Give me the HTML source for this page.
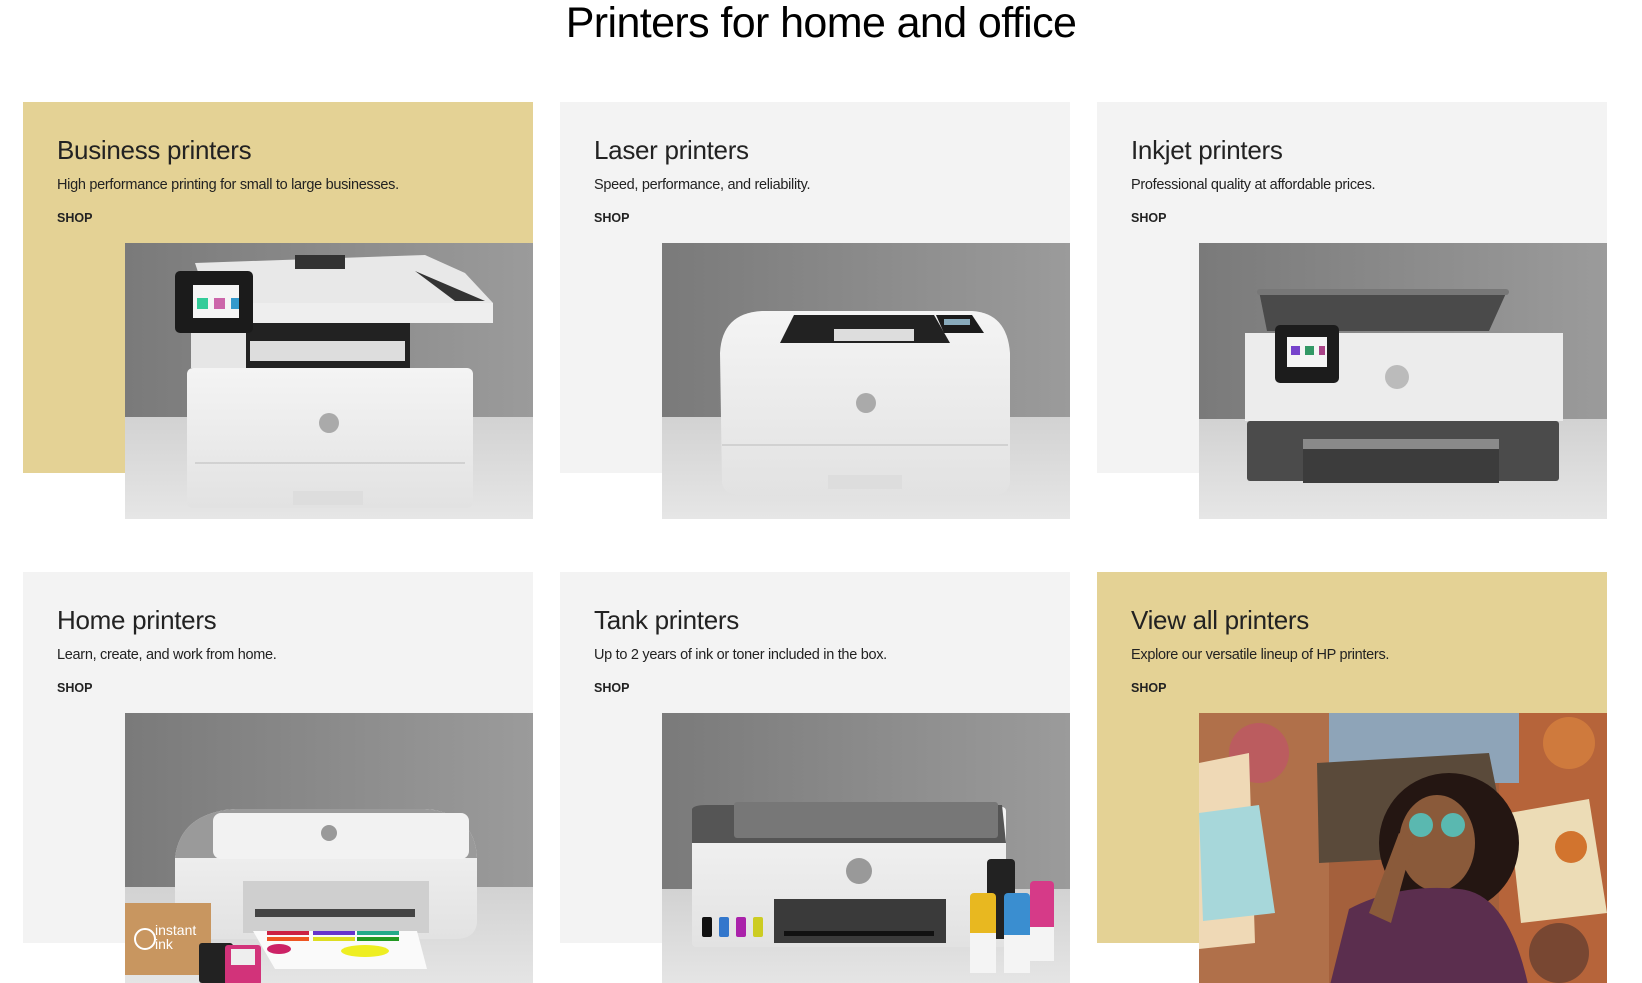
<!DOCTYPE html>
<html><head><meta charset="utf-8"><style>
*{margin:0;padding:0;box-sizing:border-box}
body{width:1642px;height:982px;overflow:hidden;background:#fff;font-family:"Liberation Sans",sans-serif;color:#1a1a1a;position:relative}
h1{position:absolute;left:0;right:0;top:-1px;text-align:center;font-weight:400;font-size:43px;letter-spacing:-0.6px;color:#000}
.card{position:absolute;width:510px}
.bg{position:absolute;left:0;top:0;width:510px;height:371px;background:#f3f3f3}
.gold .bg{background:#e4d295}
.t{position:absolute;left:34px;top:33px;font-size:26px;letter-spacing:-0.3px;color:#222}
.s{position:absolute;left:34px;top:75px;font-size:14.5px;letter-spacing:-0.3px;color:#222}
.shop{position:absolute;left:34px;top:109px;font-size:12.5px;font-weight:700;color:#222}
.img{position:absolute;left:102px;top:141px;width:408px;height:276px;overflow:hidden;background:#888}
.img svg{display:block}
</style></head><body>
<h1>Printers for home and office</h1>

<svg width="0" height="0" style="position:absolute"><defs>
<linearGradient id="wall" x1="0" y1="0" x2="1" y2="0"><stop offset="0" stop-color="#7a7a7a"/><stop offset="1" stop-color="#9b9b9b"/></linearGradient>
<linearGradient id="floor" x1="0" y1="0" x2="0" y2="1"><stop offset="0" stop-color="#d2d2d2"/><stop offset="1" stop-color="#e6e6e6"/></linearGradient>
<linearGradient id="wh" x1="0" y1="0" x2="0" y2="1"><stop offset="0" stop-color="#f4f4f4"/><stop offset="1" stop-color="#e2e2e2"/></linearGradient>
</defs></svg>

<div class="card gold" style="left:23px;top:102px"><div class="bg"></div>
<div class="t">Business printers</div><div class="s">High performance printing for small to large businesses.</div><div class="shop">SHOP</div>
<div class="img"><svg width="408" height="276" viewBox="0 0 408 276">
<rect width="408" height="174" fill="url(#wall)"/><rect y="174" width="408" height="102" fill="url(#floor)"/>
<path d="M70 20 L300 12 L340 30 L368 60 L368 78 L90 80 Z" fill="#e8e8e8"/>
<path d="M290 28 L360 58 L330 58 Z" fill="#333"/>
<rect x="170" y="12" width="50" height="14" fill="#333"/>
<rect x="62" y="60" width="306" height="20" fill="#eee"/>
<rect x="120" y="80" width="165" height="45" fill="#222"/>
<rect x="125" y="98" width="155" height="20" fill="#ddd"/>
<rect x="66" y="80" width="55" height="45" fill="#e6e6e6"/>
<rect x="50" y="28" width="78" height="62" rx="5" fill="#1b1b1b"/>
<rect x="68" y="42" width="46" height="33" fill="#f5f5f5"/>
<rect x="72" y="55" width="11" height="11" fill="#3c9"/><rect x="89" y="55" width="11" height="11" fill="#c6a"/><rect x="106" y="55" width="8" height="11" fill="#39c"/>
<rect x="62" y="125" width="286" height="140" rx="6" fill="url(#wh)"/>
<line x1="70" y1="220" x2="340" y2="220" stroke="#bbb"/>
<rect x="168" y="248" width="70" height="14" fill="#ddd"/>
<circle cx="204" cy="180" r="10" fill="#aaa"/>
</svg></div></div>

<div class="card" style="left:560px;top:102px"><div class="bg"></div>
<div class="t">Laser printers</div><div class="s">Speed, performance, and reliability.</div><div class="shop">SHOP</div>
<div class="img"><svg width="408" height="276" viewBox="0 0 408 276">
<rect width="408" height="174" fill="url(#wall)"/><rect y="174" width="408" height="102" fill="url(#floor)"/>
<path d="M58 110 Q60 70 100 68 L310 68 Q345 70 348 110 L348 240 Q346 252 330 252 L80 252 Q62 252 60 240 Z" fill="url(#wh)"/>
<path d="M118 100 L132 72 L272 72 L288 100 Z" fill="#222"/><rect x="172" y="86" width="80" height="12" fill="#ddd"/>
<path d="M274 72 L310 72 L322 90 L282 90 Z" fill="#1b1b1b"/><rect x="282" y="76" width="26" height="6" fill="#8ab"/>
<line x1="60" y1="202" x2="346" y2="202" stroke="#bbb"/>
<rect x="166" y="232" width="74" height="14" fill="#ddd"/>
<circle cx="204" cy="160" r="10" fill="#aaa"/>
</svg></div></div>

<div class="card" style="left:1097px;top:102px"><div class="bg"></div>
<div class="t">Inkjet printers</div><div class="s">Professional quality at affordable prices.</div><div class="shop">SHOP</div>
<div class="img"><svg width="408" height="276" viewBox="0 0 408 276">
<rect width="408" height="176" fill="url(#wall)"/><rect y="176" width="408" height="100" fill="url(#floor)"/>
<path d="M60 48 L308 48 L290 88 L68 88 Z" fill="#4a4a4a"/><rect x="58" y="46" width="252" height="6" rx="3" fill="#777"/>
<rect x="46" y="90" width="318" height="88" fill="#ececec"/>
<rect x="48" y="178" width="312" height="60" rx="3" fill="#4b4b4b"/>
<rect x="104" y="196" width="196" height="44" fill="#3c3c3c"/><rect x="104" y="196" width="196" height="10" fill="#8a8a8a"/>
<rect x="76" y="82" width="64" height="58" rx="5" fill="#1c1c1c"/>
<rect x="88" y="94" width="40" height="30" fill="#f5f5f5"/>
<rect x="92" y="103" width="9" height="9" fill="#74c"/><rect x="106" y="103" width="9" height="9" fill="#396"/><rect x="120" y="103" width="6" height="9" fill="#a48"/>
<circle cx="198" cy="134" r="12" fill="#bbb"/>
</svg></div></div>

<div class="card" style="left:23px;top:572px"><div class="bg"></div>
<div class="t">Home printers</div><div class="s">Learn, create, and work from home.</div><div class="shop">SHOP</div>
<div class="img" style="height:270px"><svg width="408" height="276" viewBox="0 0 408 276">
<rect width="408" height="174" fill="url(#wall)"/><rect y="174" width="408" height="102" fill="url(#floor)"/>
<path d="M50 145 Q55 100 110 96 L300 96 Q350 100 352 145 L352 210 Q350 226 330 226 L72 226 Q52 226 50 210 Z" fill="url(#wh)"/>
<path d="M50 145 Q55 100 110 96 L300 96 Q350 100 352 145 Z" fill="#9a9a9a"/>
<rect x="88" y="100" width="256" height="46" rx="8" fill="#f2f2f2"/>
<rect x="118" y="168" width="186" height="52" fill="#cfcfcf"/><rect x="130" y="196" width="160" height="8" fill="#444"/>
<path d="M128 218 L292 218 L302 256 L150 256 Z" fill="#fafafa"/>
<rect x="142" y="218" width="42" height="4" fill="#c24"/><rect x="188" y="218" width="42" height="4" fill="#63c"/><rect x="232" y="218" width="42" height="4" fill="#2a8"/>
<rect x="142" y="224" width="42" height="4" fill="#e52"/><rect x="188" y="224" width="42" height="4" fill="#dd2"/><rect x="232" y="224" width="42" height="4" fill="#292"/>
<ellipse cx="240" cy="238" rx="24" ry="6" fill="#ee2"/><ellipse cx="154" cy="236" rx="12" ry="5" fill="#c26"/>
<rect x="0" y="190" width="86" height="72" fill="#c89660"/><text x="30" y="222" font-size="14" fill="#fff" font-family="Liberation Sans">instant</text><text x="30" y="236" font-size="14" fill="#fff" font-family="Liberation Sans">ink</text>
<circle cx="20" cy="226" r="10" fill="none" stroke="#fff" stroke-width="2"/>
<rect x="74" y="230" width="34" height="40" rx="3" fill="#222"/><rect x="100" y="232" width="36" height="40" rx="3" fill="#d2337a"/><rect x="106" y="236" width="24" height="16" fill="#eee"/>
<circle cx="204" cy="120" r="8" fill="#999"/>
</svg></div></div>

<div class="card" style="left:560px;top:572px"><div class="bg"></div>
<div class="t">Tank printers</div><div class="s">Up to 2 years of ink or toner included in the box.</div><div class="shop">SHOP</div>
<div class="img" style="height:270px"><svg width="408" height="276" viewBox="0 0 408 276">
<rect width="408" height="176" fill="url(#wall)"/><rect y="176" width="408" height="100" fill="url(#floor)"/>
<rect x="30" y="94" width="314" height="140" rx="4" fill="url(#wh)"/>
<path d="M30 130 L30 96 Q32 92 44 92 L340 92 L344 130 Z" fill="#555"/>
<rect x="72" y="89" width="264" height="36" rx="3" fill="#777"/>
<rect x="112" y="186" width="172" height="44" fill="#3a3a3a"/><rect x="122" y="218" width="150" height="5" fill="#111"/>
<rect x="40" y="204" width="10" height="20" rx="2" fill="#111"/><rect x="57" y="204" width="10" height="20" rx="2" fill="#37c"/><rect x="74" y="204" width="10" height="20" rx="2" fill="#a2a"/><rect x="91" y="204" width="10" height="20" rx="2" fill="#cc2"/>
<circle cx="197" cy="158" r="13" fill="#999"/>
<rect x="325" y="146" width="28" height="80" rx="4" fill="#222"/>
<rect x="308" y="180" width="26" height="80" rx="4" fill="#e8b820"/><rect x="308" y="220" width="26" height="40" fill="#f4f4f4"/>
<rect x="342" y="180" width="26" height="80" rx="4" fill="#3a8ed0"/><rect x="342" y="222" width="26" height="38" fill="#f4f4f4"/>
<rect x="368" y="168" width="24" height="80" rx="4" fill="#d63a88"/><rect x="368" y="214" width="24" height="34" fill="#f4f4f4"/>
</svg></div></div>

<div class="card gold" style="left:1097px;top:572px"><div class="bg"></div>
<div class="t">View all printers</div><div class="s">Explore our versatile lineup of HP printers.</div><div class="shop">SHOP</div>
<div class="img" style="height:270px;background:#a05a3a"><svg width="408" height="276" viewBox="0 0 408 276">
<rect width="408" height="276" fill="#a4603c"/>
<rect x="0" y="0" width="130" height="276" fill="#b0704a"/><rect x="300" y="0" width="108" height="276" fill="#b6643a"/>
<circle cx="60" cy="40" r="30" fill="#c34f6e" opacity=".6"/><circle cx="370" cy="30" r="26" fill="#e08840" opacity=".6"/><circle cx="360" cy="240" r="30" fill="#3a2a2a" opacity=".5"/>
<rect x="130" y="0" width="190" height="70" fill="#8ea4b8"/>
<path d="M118 50 L290 40 L310 140 L120 150 Z" fill="#5a4a3a"/>
<path d="M0 50 L50 40 L56 230 L0 236 Z" fill="#efd9b6"/>
<path d="M0 100 L60 92 L76 200 L4 208 Z" fill="#a7d7da"/>
<path d="M310 100 L390 86 L408 200 L322 210 Z" fill="#ecdcb6"/>
<circle cx="372" cy="134" r="16" fill="#d2742e"/>
<ellipse cx="250" cy="130" rx="70" ry="70" fill="#241612"/>
<ellipse cx="238" cy="130" rx="38" ry="48" fill="#8a5a3a"/>
<circle cx="222" cy="112" r="12" fill="#5ab8b0"/><circle cx="254" cy="112" r="12" fill="#5ab8b0"/>
<path d="M130 276 L150 196 Q200 170 260 176 Q310 180 330 276 Z" fill="#5b2e4e"/>
<path d="M170 200 L200 120 L214 130 L192 210 Z" fill="#8a5a3a"/>
</svg></div></div>
</body></html>
